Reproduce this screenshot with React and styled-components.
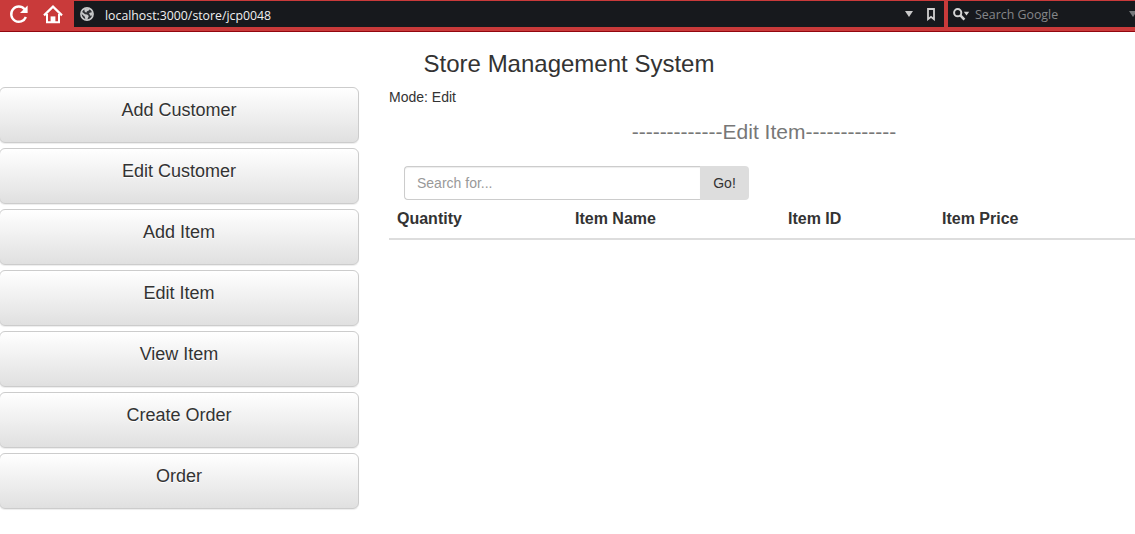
import React from "react";
import styled, { createGlobalStyle } from "styled-components";

const GlobalStyle = createGlobalStyle`
  * { box-sizing: border-box; }
  body {
    margin: 0;
    background: #fff;
    color: #333;
    font: 14px/20px "Liberation Sans", Arial, sans-serif;
    overflow: hidden;
  }
`;

const Page = styled.div`
  height: 534px;
  overflow: hidden;
`;

const BrowserBar = styled.div`
  display: flex;
  height: 32px;
  padding-top: 1px;
  background: #c93a3a;
  border-bottom: 1px solid #92060f;
  font-family: "Open Sans", "Noto Sans", sans-serif;
`;

const NavIcons = styled.div`
  width: 74px;
  flex: none;
  display: flex;
  padding: 2px 0 0 8px;
  gap: 12px;
`;

const Field = styled.div`
  display: flex;
  align-items: center;
  height: 26px;
  background: #17191d;
  white-space: nowrap;
`;

const AddressField = styled(Field)`
  width: 870px;
  flex: none;
  margin-right: 4px;
  padding: 0 9px 0 6px;
`;

const SearchField = styled(Field)`
  width: 187px;
  flex: none;
  padding-left: 5px;
  overflow: hidden;
`;

const Url = styled.span`
  flex: 1;
  margin-left: 11px;
  padding-top: 3px;
  color: #f0f0f0;
  font-size: 12.3px;
  letter-spacing: 0;
`;

const SearchHint = styled.span`
  flex: 1;
  margin-left: 5px;
  padding-top: 2px;
  color: #85878a;
  font-size: 12.4px;
`;

const Title = styled.h1`
  margin: 19px 0 10px;
  padding-left: 3px;
  font-size: 24px;
  line-height: 26px;
  font-weight: 400;
  text-align: center;
`;

const Columns = styled.div`
  display: flex;
`;

const Sidebar = styled.nav`
  flex: none;
  width: 360px;
  margin: 0 30px 0 -1px;
  display: flex;
  flex-direction: column;
  gap: 5px;
`;

const MenuButton = styled.button`
  height: 56px;
  padding: 0 0 10px;
  border: 1px solid #ccc;
  border-radius: 6px;
  background: linear-gradient(#fff, #e0e0e0);
  box-shadow: inset 0 1px 0 rgba(255, 255, 255, 0.15), 0 1px 1px rgba(0, 0, 0, 0.075);
  text-shadow: 0 1px 0 #fff;
  color: #333;
  font: 18px/20px "Liberation Sans", Arial, sans-serif;
`;

const Main = styled.main`
  flex: none;
  width: 750px;
`;

const Mode = styled.p`
  margin: 0;
`;

const SectionTitle = styled.h2`
  margin: 10px 0 19px;
  color: #777;
  font-size: 21px;
  line-height: 30px;
  font-weight: 400;
  text-align: center;
`;

const SearchGroup = styled.div`
  display: flex;
  width: 345px;
  height: 34px;
  margin-left: 15px;
`;

const SearchInput = styled.input`
  width: 296px;
  padding: 6px 12px;
  border: 1px solid #ccc;
  border-right: 0;
  border-radius: 4px 0 0 4px;
  box-shadow: inset 0 1px 1px rgba(0, 0, 0, 0.075);
  font: inherit;
  &::placeholder { color: #999; opacity: 1; }
`;

const GoButton = styled.button`
  width: 49px;
  padding: 0;
  border: 0;
  border-radius: 0 4px 4px 0;
  background: #ddd;
  color: #333;
  font: inherit;
`;

const Table = styled.table`
  width: 750px;
  table-layout: fixed;
  border-collapse: collapse;
`;

const HeadCell = styled.th`
  width: ${(p) => p.$width}px;
  padding: 8px;
  border-bottom: 2px solid #ddd;
  font-size: 16px;
  line-height: 22px;
  text-align: left;
`;

const ReloadIcon = () => (
  <svg width="22" height="22" viewBox="0 0 22 22">
    <path d="M16.6 6.2A7.6 7.6 0 1 0 17.9 14" fill="none" stroke="#fff" strokeWidth="2.4" />
    <path d="M19.6 2.4V10H12z" fill="#fff" />
  </svg>
);

const HomeIcon = () => (
  <svg width="22" height="22" viewBox="0 0 22 22">
    <path d="M2 12.4L11 3.6L20 12.4" fill="none" stroke="#fff" strokeWidth="2.2" />
    <path d="M5 11V19.2H17V11" fill="none" stroke="#fff" strokeWidth="2" />
    <path d="M8.6 13.4H13.4V19.5H8.6Z" fill="#fff" />
  </svg>
);

const GlobeIcon = () => (
  <svg width="14" height="14" viewBox="0 0 14 14">
    <circle cx="7" cy="7" r="6.1" fill="#303236" stroke="#c8c9ca" strokeWidth="1.6" />
    <path d="M1.5 4.4L5 7.2L7.2 7.6L8.8 9L7.2 12.8L5.4 12.6L4.8 9.8L1.2 6.5z" fill="#c8c9ca" />
    <path d="M4.2 1.5L9.8 1.5L8.8 3.6L7 4.2L6.2 5.8L4.6 4.4z" fill="#c8c9ca" />
    <path d="M9 6L12.6 5V8.6L10.4 8.8z" fill="#c8c9ca" />
  </svg>
);

const DropArrow = ({ color = "#c9c9c9" }) => (
  <svg width="8" height="6" viewBox="0 0 8 6">
    <path d="M0 0h8L4 6z" fill={color} />
  </svg>
);

const TrailingArrow = styled.svg`
  flex: none;
  margin-right: -2px;
`;

const BookmarkIcon = styled.svg`
  margin-left: 14px;
`;

const Bookmark = () => (
  <BookmarkIcon width="8" height="13" viewBox="0 0 8 13">
    <path d="M1 1H7V11.2L4 8.8L1 11.2Z" fill="none" stroke="#d0d0d0" strokeWidth="1.8" />
  </BookmarkIcon>
);

const SearchIcon = () => (
  <svg width="17" height="13" viewBox="0 0 17 13">
    <circle cx="4.7" cy="4.7" r="3.6" fill="none" stroke="#d4d4d4" strokeWidth="2" />
    <path d="M7.2 7.2L11.4 11.6" stroke="#d4d4d4" strokeWidth="2.6" />
    <path d="M10.8 3.8h5.4L13.5 7.4z" fill="#d4d4d4" />
  </svg>
);

const MENU = ["Add Customer", "Edit Customer", "Add Item", "Edit Item", "View Item", "Create Order", "Order"];

const COLUMNS = [
  ["Quantity", 178],
  ["Item Name", 213],
  ["Item ID", 154],
  ["Item Price", 205],
];

export default function App() {
  return (
    <Page>
      <GlobalStyle />
      <BrowserBar>
        <NavIcons>
          <ReloadIcon />
          <HomeIcon />
        </NavIcons>
        <AddressField>
          <GlobeIcon />
          <Url>localhost:3000/store/jcp0048</Url>
          <DropArrow />
          <Bookmark />
        </AddressField>
        <SearchField>
          <SearchIcon />
          <SearchHint>Search Google</SearchHint>
          <TrailingArrow width="8" height="6" viewBox="0 0 8 6">
            <path d="M0 0h8L4 6z" fill="#77797c" />
          </TrailingArrow>
        </SearchField>
      </BrowserBar>
      <Title>Store Management System</Title>
      <Columns>
        <Sidebar>
          {MENU.map((label) => (
            <MenuButton key={label}>{label}</MenuButton>
          ))}
        </Sidebar>
        <Main>
          <Mode>Mode: Edit</Mode>
          <SectionTitle>-------------Edit Item-------------</SectionTitle>
          <SearchGroup>
            <SearchInput placeholder="Search for..." />
            <GoButton>Go!</GoButton>
          </SearchGroup>
          <Table>
            <thead>
              <tr>
                {COLUMNS.map(([name, width]) => (
                  <HeadCell key={name} $width={width}>{name}</HeadCell>
                ))}
              </tr>
            </thead>
          </Table>
        </Main>
      </Columns>
    </Page>
  );
}
